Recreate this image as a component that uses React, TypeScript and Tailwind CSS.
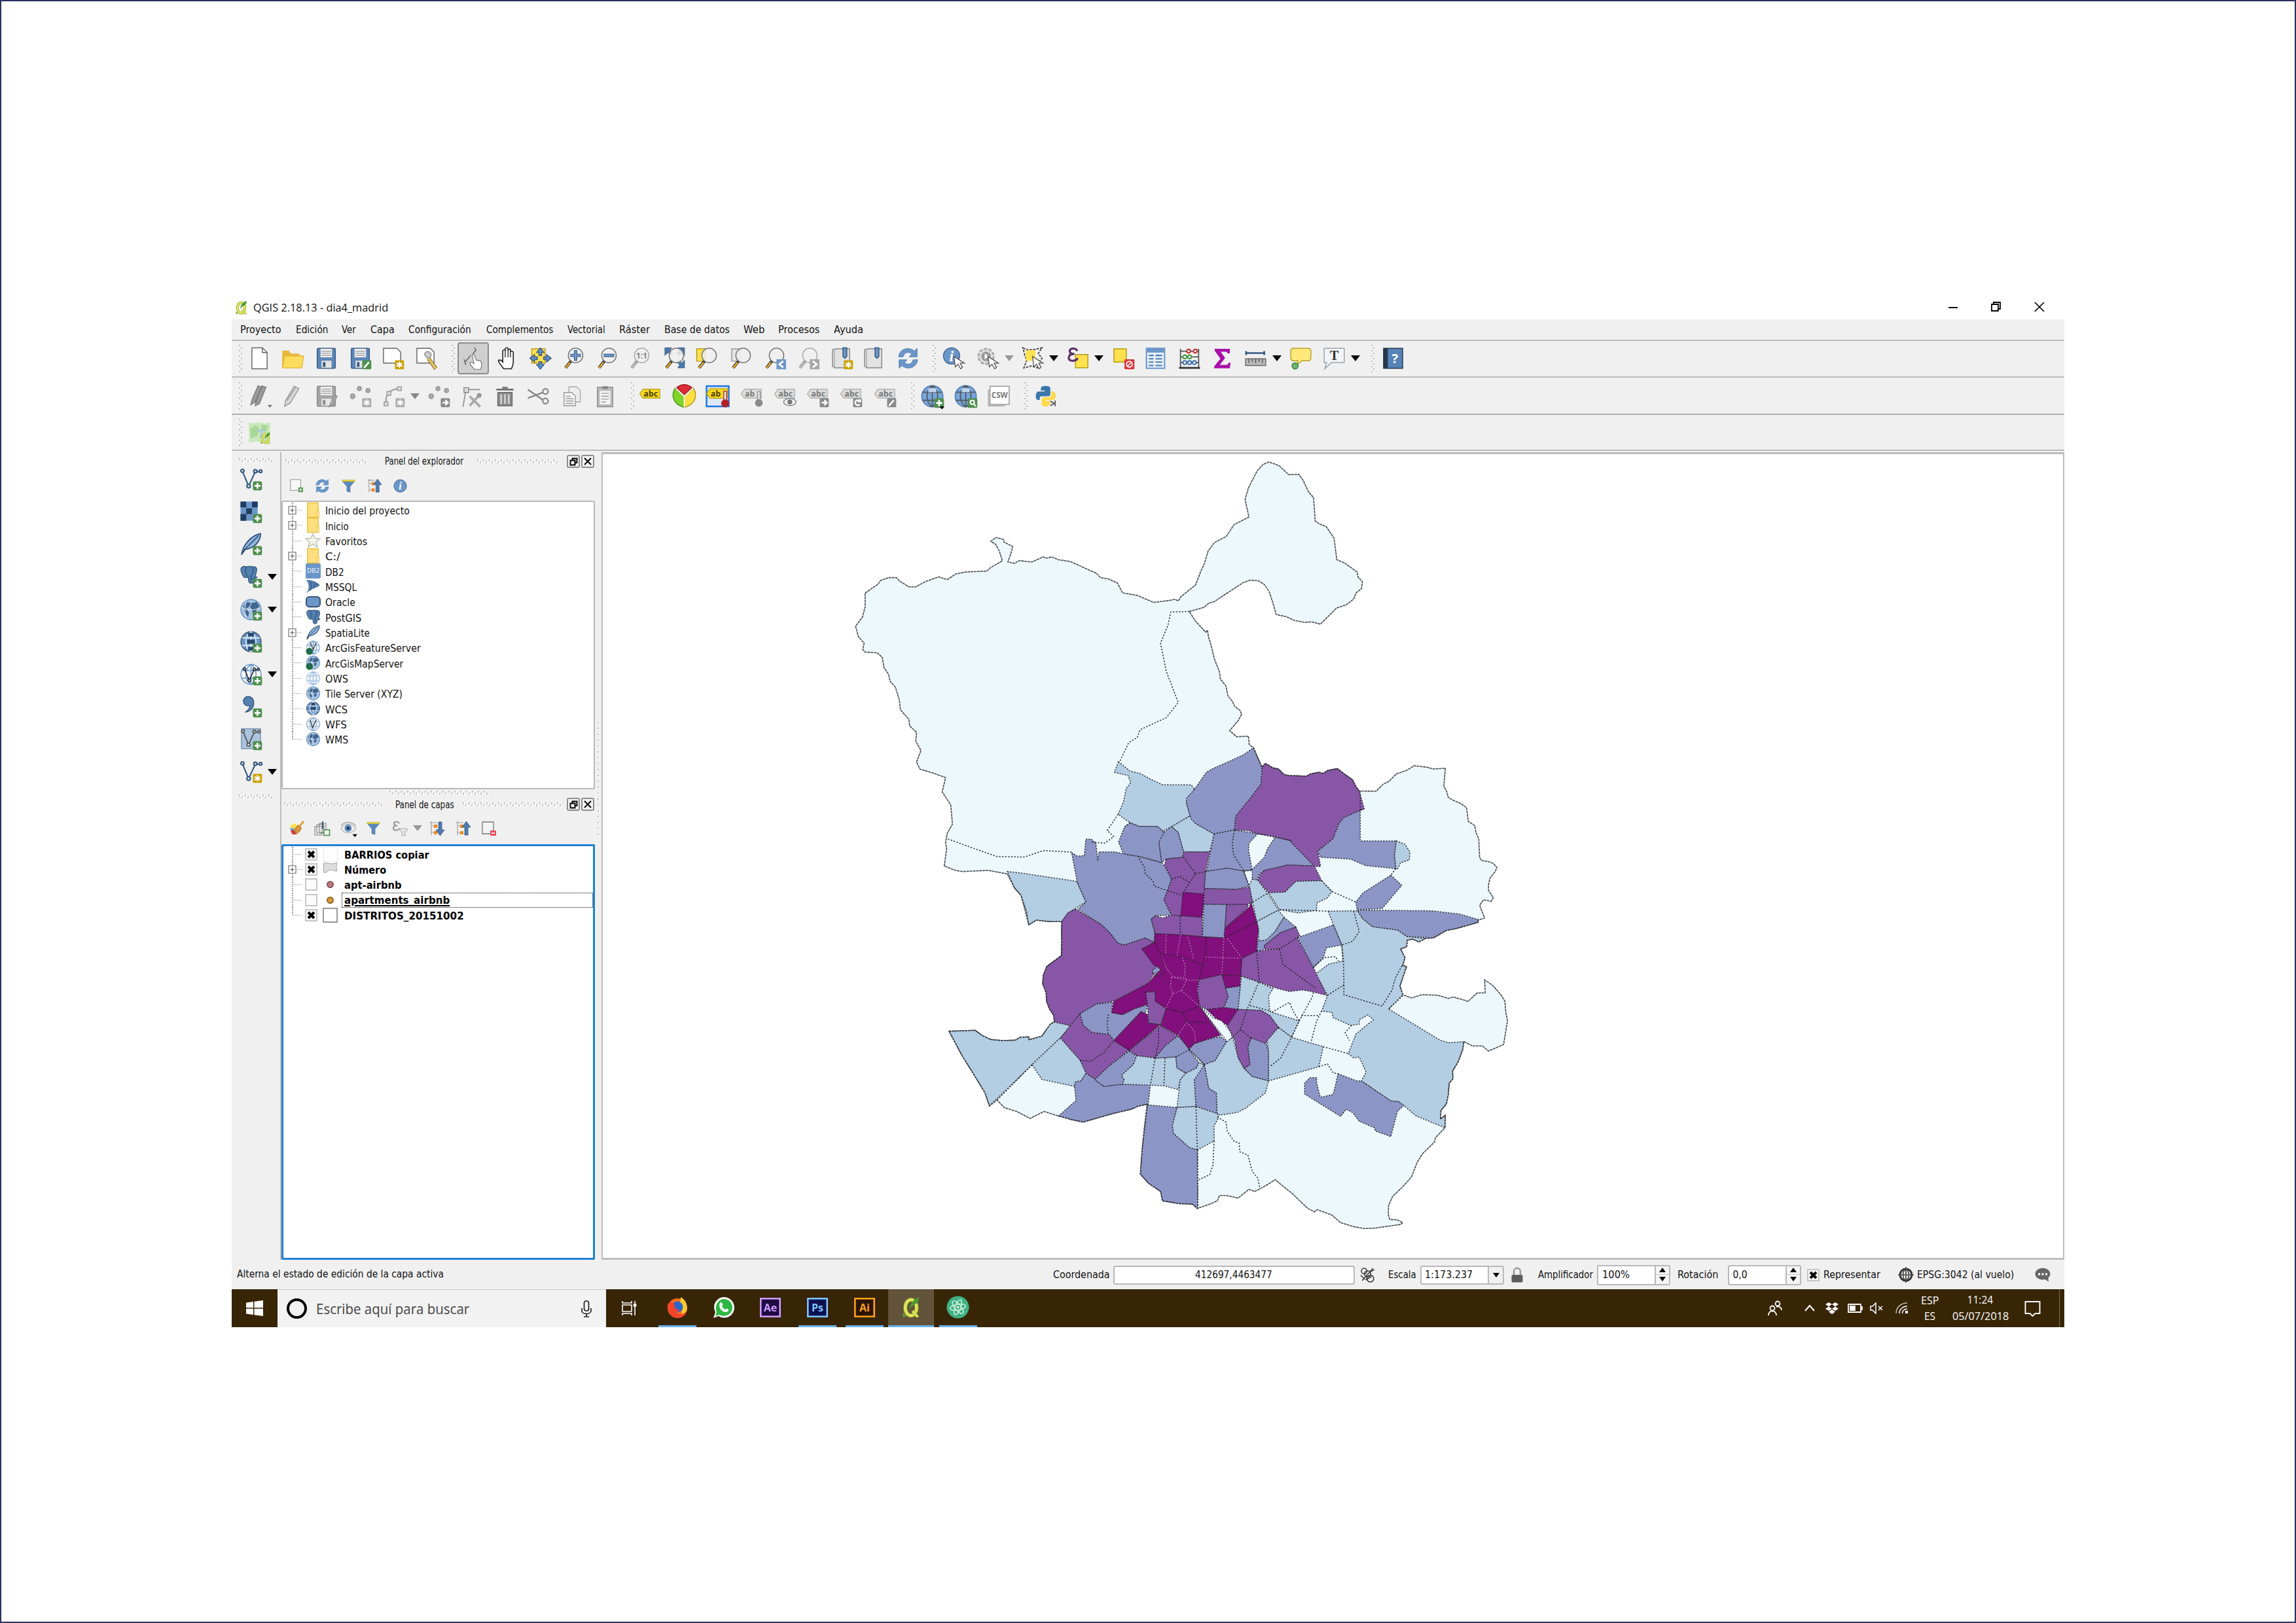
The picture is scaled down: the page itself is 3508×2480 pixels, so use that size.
import React, { useLayoutEffect, useRef, useState } from "react";

/* ---------- text that is fitted to a given width ---------- */
function Fit({ w, children, className = "", inner = "" }: { w: number; children: string; className?: string; inner?: string }) {
  const ref = useRef<HTMLSpanElement>(null);
  const [k, setK] = useState(1);
  useLayoutEffect(() => {
    if (ref.current && ref.current.offsetWidth) setK(w / ref.current.offsetWidth);
  }, [w, children]);
  return (
    <span className={"block shrink-0 whitespace-nowrap " + className} style={{ width: w }}>
      <span ref={ref} className={"inline-block origin-left " + inner} style={{ transform: `scaleX(${k})` }}>
        {children}
      </span>
    </span>
  );
}

/* ---------- strip: items laid one after another by their centres ---------- */
type Item = [number, number, React.ReactNode];
function Strip({ from, items, className = "" }: { from: number; items: Item[]; className?: string }) {
  let end = from;
  return (
    <div className={"flex items-center " + className}>
      {items.map(([c, w, node], i) => {
        const ml = c - w / 2 - end;
        end = c + w / 2;
        return (
          <div key={i} className="flex shrink-0 items-center justify-center" style={{ marginLeft: ml, width: w }}>
            {node}
          </div>
        );
      })}
    </div>
  );
}

const BL = "#6b96c8";
const DB = "#34597f";
const G = "#999";

function I({ s = 35, children, className = "" }: { s?: number; children: React.ReactNode; className?: string }) {
  return (
    <svg width={s} height={s} viewBox="0 0 24 24" fill="none" className={"shrink-0 overflow-visible " + className}>
      {children}
    </svg>
  );
}
const Arrow = ({ c = "#000" }: { c?: string }) => (
  <svg width="14" height="9" viewBox="0 0 14 9" className="shrink-0"><path d="M0 0h14L7 9z" fill={c} /></svg>
);
const Handle = () => (
  <svg width="8" height="44" viewBox="0 0 8 44" className="shrink-0">
    {[0, 1, 2, 3, 4, 5].map((i) => (
      <g key={i}>
        <path d={`M1 ${1 + i * 8}h2v2h-2zM4 ${5 + i * 8}h2v2h-2z`} fill="#bbb" />
        <path d={`M0 ${3 + i * 8}h2v1h-2zM3 ${7 + i * 8}h2v1h-2z`} fill="#fff" />
      </g>
    ))}
  </svg>
);
function Dots({ w }: { w: number }) {
  const n = Math.floor(w / 9);
  return (
    <svg width={w} height="9" viewBox={`0 0 ${w} 9`} className="shrink-0">
      {Array.from({ length: n }, (_, i) => (
        <g key={i}>
          <path d={`M${i * 9 + 1} 1h2v3h-2zM${i * 9 + 5} 4h2v3h-2z`} fill="#c4c4c4" />
          <path d={`M${i * 9 + 3} 2h2v3h-2zM${i * 9 + 7} 5h2v3h-2z`} fill="#fff" />
        </g>
      ))}
    </svg>
  );
}
const Plus = ({ c = "#4f8f4f" }: { c?: string }) => (
  <g><rect x="14" y="14" width="9.5" height="9.5" rx="1.5" fill={c} /><path d="M18.75 15.8v6M15.8 18.75h6" stroke="#fff" strokeWidth="1.8" /></g>
);
const Star = ({ c = "#c9a100" }: { c?: string }) => (
  <g><rect x="14" y="14" width="9.5" height="9.5" rx="1" fill={c} /><path d="M18.75 15.5v6.5M15.8 17l6 3.4M21.6 17l-6 3.4" stroke="#fff" strokeWidth="1.4" /></g>
);
const Sheet = () => <path d="M2 1.5h14l4 4V17H2z" fill="#fff" stroke="#666" strokeWidth="1" />;
const Lens = ({ g = false, children }: { g?: boolean; children?: React.ReactNode }) => (
  <g>
    <path d="M9.5 14.5L3.5 22" stroke={g ? "#999" : "#333"} strokeWidth="3.2" />
    <path d="M8.2 16.3L3.6 22" stroke={g ? "#bbb" : "#e8a92c"} strokeWidth="1.8" />
    <circle cx="14" cy="9" r="7.6" fill="#eef0ee" fillOpacity=".85" stroke={g ? "#aaa" : "#777"} strokeWidth="1" />
    {children}
  </g>
);
const Floppy = ({ g = false }: { g?: boolean }) => (
  <g>
    <rect x="2.5" y="1.5" width="19" height="21" rx="1" fill={g ? "#a5a5a5" : "#5c86b8"} stroke={g ? "#888" : "#3c5d85"} />
    <path d="M6 2h12v9H6z" fill="#f0f0f0" /><path d="M7 4.5h10M7 6.8h10M7 9h10" stroke="#999" strokeWidth=".9" />
    <path d="M7 14.5h10.5V22H7z" fill="#e4e4e4" /><path d="M8.5 16h2.6v5H8.5z" fill={g ? "#888" : "#34597f"} />
  </g>
);
const Refresh = () => (
  <g fill={BL} stroke="#3f74b5" strokeWidth=".5">
    <path d="M2 10.5C2.5 5 7 1.5 12 1.8c2.500 0 5 1 6.500 2.500L21.500 1.500V10.500H13L15.800 7.400C12 4.500 8 6 6.800 10.500z" />
    <path d="M22 13.500C21.500 19 17 22.500 12 22.200c-2.500 0-5-1-6.500-2.500L2.500 22.500V13.500H11L8.200 16.600C12 19.500 16 18 17.200 13.500z" />
  </g>
);
const Tag = ({ c = "#c9c9c9", t = "abc", k = "#888" }: { c?: string; t?: string; k?: string }) => (
  <g>
    <path d="M1 9.500L4.500 4.500H22V14H4.500z" fill={c} stroke={k} strokeWidth=".8" />
    <text x="5" y="12" fontSize="8.500" fontWeight="bold" fontFamily="Open Sans, sans-serif" fill={c === "#c9c9c9" || c === "#ddd" ? "#777" : "#4a4000"} textLength={t.length * 5} lengthAdjust="spacingAndGlyphs">{t}</text>
  </g>
);
const Cursor = () => <path d="M12 10l1.500 11 2.700-2.800L19 23l2-1.500-2.500-4.400H23z" fill="#fff" stroke="#555" strokeWidth=".9" />;
const Globe = ({ fill = "#9cbce0", line = "#fff", edge = "#4a78ac" }: { fill?: string; line?: string; edge?: string }) => (
  <g>
    <circle cx="12" cy="12" r="10.500" fill={fill} stroke={edge} strokeWidth="1" />
    <path d="M2.500 8h19M2.500 16h19M12 1.500v21M12 1.500C5 6 5 18 12 22.500M12 1.500C19 6 19 18 12 22.500" stroke={line} strokeWidth="1.100" />
  </g>
);
const Earth = () => (
  <g>
    <circle cx="12" cy="12" r="10.500" fill="#a9c4e2" stroke={BL} strokeWidth="1.200" />
    <path d="M4 8l4-4 4 1-2 4-3 2 3 4-1 5-4-5zM13 5l5-1 3 5-3 2-1 5-3 2-1-6-2-3z" fill="#41678f" />
    <path d="M2 10c6 3 14 3 20 0M7 3c-2 6-2 12 0 18" stroke="#dbe7f4" strokeWidth=".8" />
  </g>
);
const Vee = ({ c = "#34597f" }: { c?: string }) => (
  <g stroke={c} strokeWidth="1.400">
    <path d="M3 3.500L9.500 19 16.500 4H22" /><circle cx="3" cy="3" r="1.700" fill="#ddd" /><circle cx="9.500" cy="19" r="1.900" fill="#ddd" />
    <circle cx="16.500" cy="3.500" r="1.700" fill="#ddd" /><circle cx="22" cy="3.500" r="1.500" fill="#ddd" />
  </g>
);
const Elephant = () => (
  <g>
    <path d="M2 3.500C4 .8 7 1 9 2c3-1 6-1 8 0 3-1 6 .5 5.500 4C22 10 21 13 20 15h3c-1 2-3 2.500-5 2v4c0 3-5.500 3-6 0l-.700-6c-2 1.500-5 1.500-6.300-.5C3 11 1 7 2 3.500z" fill="#5480b0" stroke="#2f4f75" strokeWidth="1" />
    <path d="M9 2C7 5 8 11 10 14M17 2c2 3 1 8-2 11v7" stroke="#2f4f75" strokeWidth="1.100" />
  </g>
);
const Feather = () => (
  <g><path d="M2 23C4 12 12 3 22 1c0 8-6 15-16 16.500z" fill="#8fb3db" stroke="#2f4f75" strokeWidth="1.200" /><path d="M3 20L20 3" stroke="#2f4f75" strokeWidth="1" /></g>
);
const Funnel = () => <g><path d="M2 4h20l-7.500 9v9l-5-1.500V13z" fill="#5a89bf" stroke="#41699a" strokeWidth=".8" /><path d="M2 2.500h20v2.500H2z" fill="#f2df3a" stroke="#a29325" strokeWidth=".5" /></g>;
const TreeArrow = ({ up = false }: { up?: boolean }) => (
  <g><path d="M3 1v21M3 8h5M3 18h5M1 3h11" stroke="#999" strokeWidth="1.100" /><path d="M7 6h5v5H7zM7 16h5v5H7z" fill="#f08a1c" />
    <path d={up ? "M14 22V10h-4l6.500-9L23 10h-4v12z" : "M14 2v12h-4l6.500 9L23 14h-4V2z"} fill="#4f7cb0" stroke="#2f5580" strokeWidth=".8" /></g>
);
const Info = () => <g><circle cx="12" cy="12" r="10" fill={BL} stroke="#41699a" /><text x="12" y="18" fontSize="17" fontStyle="italic" fontWeight="bold" textAnchor="middle" fontFamily="Liberation Serif, serif" fill="#fff">i</text></g>;
const GDots = () => <g fill="#aaa" stroke="#888" strokeWidth=".7"><circle cx="11" cy="4" r="2.200" /><circle cx="20" cy="6" r="2.200" /><circle cx="4" cy="12" r="2.500" /></g>;
const GBadge = ({ d }: { d: string }) => <g><rect x="14" y="14" width="9.500" height="9.500" rx="1" fill="#8a8a8a" /><path d={d} stroke="#fff" strokeWidth="1.700" /></g>;
const Epsilon = ({ c }: { c: string }) => (
  <path d="M10.500 3.500C9 1 3 1 3 4.500c0 2.500 2.500 3 5 3-3.500 0-6 1-6 4 0 4 7 4 9 1" stroke={c} strokeWidth="2.200" strokeLinecap="round" />
);
const QLogo = () => (
  <g>
    <ellipse cx="11.500" cy="12.500" rx="6.300" ry="8.800" stroke="#8d9c2a" strokeWidth="4.400" />
    <ellipse cx="11.500" cy="12.500" rx="6.300" ry="8.800" stroke="#dde65c" strokeWidth="3.200" />
    <path d="M12 17l3-2 5.500 7.500-3 1z" fill="#dde65c" stroke="#8d9c2a" strokeWidth=".6" />
    <path d="M10 14c0-5 3-10 10-13.500.8 3.500-.5 6.500-3.500 8-2.500 1-4 2.500-6.500 5.500z" fill="#4c9a2f" />
    <path d="M3 18l3 4-3.500 1z" fill="#6da33a" />
  </g>
);

const row1: Item[] = [
  [368, 8, <Handle />],
  [396, 36, <I><path d="M4 1h11l5 5v17H4z" fill="#fff" stroke="#666" /><path d="M15 1v5h5" stroke="#666" /></I>],
  [446.5, 36, <I><path d="M1.500 4h7l2 3h9v15h-18z" fill="#e8b93b" /><path d="M2 22L4 9.500h20L22 22z" fill="#fddc5c" stroke="#e0b13a" strokeWidth=".8" /></I>],
  [498, 36, <I><Floppy /></I>],
  [550, 36, <I><Floppy /><rect x="14" y="14" width="9.500" height="9.500" rx="1" fill="#4f8f4f" /><path d="M16 22l5-6" stroke="#fff" strokeWidth="1.800" /></I>],
  [600, 36, <I><Sheet /><Star /></I>],
  [651, 36, <I><Sheet /><path d="M10 8a3.500 3.500 0 1 1 4 4l-2-1z" fill="#ccc" stroke="#888" /><path d="M14 12l8 11" stroke="#8a7430" strokeWidth="4" /><path d="M14 12l8 11" stroke="#e0c468" strokeWidth="2.500" /></I>],
  [693, 8, <Handle />],
  [723, 48, (
    <div className="flex h-[49px] w-[48px] items-center justify-center rounded-sm border-2 border-[#8b8b8b] bg-[#cfcfcf]">
      <I><path d="M13 23.500c-2-2.500-4-4-5-6.500l1.500-1 3 1.500L10.500 8l1.800-.5L15 14l3.500.500c2.500 1 2.500 5 1 9z" fill="#fff" stroke="#777" strokeWidth=".8" /><path d="M11.500 7l3-3.500L13 1M3 16l6-7M2 13l2 6" stroke="#555" strokeWidth=".9" /></I>
    </div>
  )],
  [775, 36, <I><path d="M8 23c-2-3-6-7-5.500-9L5 14l2 2V4c1-1.500 2.500-1 2.500 0V2c1-1.500 2.500-1.500 3 0v1c1-1 2.500-1 2.500.5V5c1-1 3-.5 3 1v10c0 3-1 5-2 7z" fill="#fff" stroke="#222" strokeWidth="1.100" /><path d="M9.500 3.500V11M12.500 3v8M15 4v7" stroke="#222" strokeWidth=".9" /></I>],
  [825, 38, <I><path d="M3 2h14v15H3z" fill="#ffe14d" stroke="#b59a1a" /><path d="M12 1l4 5h-2.500v3h-3V6H8zM12 23.500l4-5h-2.500v-3h-3v3H8zM1 12l5-4v2.500h3v3H6V16zM23.500 12l-5-4v2.500h-3v3h3V16z" fill="#5b8cc5" stroke="#28486c" strokeWidth=".7" /></I>],
  [876, 36, <I><Lens><path d="M14 3.500v11M8.500 9h11" stroke={DB} strokeWidth="3.400" /><path d="M14 4v10M9 9h10" stroke={BL} strokeWidth="2" /></Lens></I>],
  [927, 36, <I><Lens><path d="M8.500 9h11" stroke={DB} strokeWidth="3.400" /><path d="M9 9h10" stroke={BL} strokeWidth="2" /></Lens></I>],
  [977.5, 36, <I><Lens g><text x="8" y="12" fontSize="8.500" fontWeight="bold" fontFamily="Open Sans, sans-serif" fill="#888" textLength="12">1:1</text></Lens></I>],
  [1030, 36, <I><path d="M2 1h7L7 4l3 3-2 2-3-3-3 3zM22.500 1h-7l2 3-3 3 2 2 3-3 3 3zM22.500 22h-7l2-3-3-3 2-2 3 3 3-3z" fill="#4a77ad" stroke="#2f5580" strokeWidth=".6" /><Lens /></I>],
  [1080, 36, <I><path d="M1 2h9v13H1z" fill="#ffe14d" stroke="#b59a1a" /><Lens /></I>],
  [1132, 36, <I><path d="M2 2h9v13H2z" fill="#e4e4e4" stroke="#999" /><Lens /></I>],
  [1183.5, 36, <I><Lens /><rect x="14" y="13" width="10" height="10.500" fill={BL} /><path d="M21 15l-4 3.300 4 3.300" stroke="#fff" strokeWidth="2" /></I>],
  [1234, 36, <I><Lens g /><rect x="14" y="13" width="10" height="10.500" fill="#a8a8a8" /><path d="M17 15l4 3.300-4 3.300" stroke="#fff" strokeWidth="2" /></I>],
  [1286, 36, <I><path d="M2 3l3-1h15v20H4l-2-2z" fill="#e2e2e2" stroke="#888" /><path d="M4 3v18" stroke="#aaa" /><path d="M13 1h4v9l-2 2-2-2z" fill={BL} stroke={DB} /><Star /></I>],
  [1335, 36, <I><path d="M2 3l3-1h15v20H4l-2-2z" fill="#e2e2e2" stroke="#888" /><path d="M4 3v18" stroke="#aaa" /><path d="M13 1h4v9l-2 2-2-2z" fill={BL} stroke={DB} /></I>],
  [1387, 36, <I><Refresh /></I>],
  [1428, 8, <Handle />],
  [1457, 36, <I><circle cx="9.500" cy="9.500" r="8.500" fill={BL} stroke="#41699a" /><text x="9.500" y="15" fontSize="16" fontStyle="italic" fontWeight="bold" textAnchor="middle" fontFamily="Liberation Serif, serif" fill="#fff">i</text><Cursor /></I>],
  [1509, 36, <I><circle cx="10" cy="10" r="8" fill="#ddd" stroke="#aaa" strokeWidth="2" strokeDasharray="3.500 1.500" /><circle cx="10" cy="10" r="5" fill="#9b9b9b" /><path d="M8.500 7v6l4.500-3z" fill="#fff" /><Cursor /></I>],
  [1542, 14, <Arrow c="#999" />],
  [1577, 36, <I><path d="M2 1l4 2h7l9-2-4 6 4 5-3 4-2 6-6-2-8 2 3-8-2-5z" fill="#f4f4f4" stroke="#444" strokeWidth="1.300" strokeDasharray="2.500 1.200" /><path d="M5 3.500h10v11H5z" fill="#ffe14d" /><Cursor /></I>],
  [1610, 14, <Arrow />],
  [1647, 36, <I><path d="M9 8h13v14H9z" fill="#ffe14d" stroke="#b59a1a" /><Epsilon c="#5b3069" /></I>],
  [1679, 14, <Arrow />],
  [1716, 36, <I><path d="M2 2h13v14H2z" fill="#ffe14d" stroke="#b59a1a" /><rect x="13" y="13" width="10.500" height="10.500" rx="1" fill="#d9363e" /><circle cx="18.200" cy="18.200" r="3" stroke="#fff" strokeWidth="1.200" /><path d="M16 20.500l4.500-4.500" stroke="#fff" /></I>],
  [1765, 36, <I><path d="M2.500 1.500h19v21h-19z" fill="#e8f0fa" stroke={BL} strokeWidth="1.400" /><path d="M3 2h18v4H3z" fill={BL} /><path d="M5 9h5M12 9h7M5 12.500h5M12 12.500h7M5 16h5M12 16h7M5 19.500h5M12 19.500h7" stroke="#4a7ab4" strokeWidth="1.400" /></I>],
  [1817, 36, <I><path d="M2.500 2v20M21.500 2v20M2 4.500h20M2 10.500h20M2 16.500h20" stroke="#555" strokeWidth="1.200" /><path d="M1 21h22v2H1z" fill="#333" /><g strokeWidth="1.300" fill="#fff"><circle cx="11" cy="4.500" r="1.900" stroke="#c22" /><circle cx="18" cy="4.500" r="1.900" stroke="#c22" /><circle cx="7" cy="10.500" r="1.900" stroke="#3b9a3b" /><circle cx="12" cy="10.500" r="1.900" stroke="#3b9a3b" /><circle cx="7" cy="16.500" r="1.900" stroke="#3b6fa8" /><circle cx="12" cy="16.500" r="1.900" stroke="#3b6fa8" /><circle cx="17" cy="16.500" r="1.900" stroke="#3b6fa8" /></g></I>],
  [1867, 36, <I><path d="M4.500 2.500h15v4h-1.500C17.500 5 17 4.700 15 4.700H9.500l5 7-6 7.600H16c2 0 2.500-.800 3-2.300h1.200l-.700 5H4v-1.500l6.500-8L4.500 4z" fill="#a80fa8" stroke="#a80fa8" strokeWidth=".8" /></I>],
  [1918, 36, <I><path d="M2 6.500h19M2 4.500v4M21 4.500v4" stroke={DB} strokeWidth="1.800" /><path d="M1.500 12.500h21v7h-21z" fill="#bbb" stroke="#666" /><path d="M5 13v4M8.500 13v3M12 13v4M15.500 13v3M19 13v4" stroke="#555" /></I>],
  [1951, 14, <Arrow />],
  [1987, 36, <I><path d="M3 1.500h18l1.500 2v9L21 14.500h-8L8 19l1-4.500H3L1.500 12.500v-9z" fill="#ffe97a" stroke="#b9a02a" /><circle cx="6" cy="20" r="3.200" fill="#6cb56c" stroke="#3d7d3d" /></I>],
  [2038, 36, <I><path d="M1.500 1.500h21v15H9L2 23l2-6.500H1.500z" fill="#f2f5f7" stroke="#99a3a8" strokeWidth="1" /><text x="12" y="13.500" fontSize="14" fontWeight="bold" textAnchor="middle" fontFamily="Liberation Serif, serif" fill="#333">T</text></I>],
  [2071, 14, <Arrow />],
  [2098, 8, <Handle />],
  [2128, 36, <I><path d="M2 1.500h20v21H2z" fill="#5683b8" stroke="#2a3b50" /><path d="M2 1.500h4.500v21H2z" fill="#26374b" /><text x="14" y="17" fontSize="14" fontWeight="bold" textAnchor="middle" fontFamily="Open Sans, sans-serif" fill="#fff">?</text></I>],
];

const abcGray = (t: string, extra: React.ReactNode) => <I><Tag c="#ddd" t={t} k="#aaa" />{extra}</I>;
const Thermo = ({ c }: { c: string }) => <g><path d="M18 7h3v10h-3z" fill="#ddd" stroke={c} strokeWidth=".8" /><circle cx="19.500" cy="19" r="4" fill={c} /></g>;
const row2: Item[] = [
  [368, 8, <Handle />],
  [398, 38, <I><path d="M1.500 21l1-5L9 1l4 1.500L6 18zM6 22l1-5L13 1l4.500 1.500L10.500 20z" fill="#9a9a9a" stroke="#777" strokeWidth=".8" /><path d="M19 21h5l-2.500 3z" fill="#777" /></I>],
  [446.5, 36, <I><path d="M4 22.500l1-6L14 1.500l5 2.500L10 19z" fill="#d8d8d8" stroke="#999" /><path d="M6.500 16.500L15.500 2.500" stroke="#999" /></I>],
  [498, 36, <I><Floppy g /><path d="M15 23l1.500-4L21.500 11l2 1-4.500 9z" fill="#aaa" stroke="#888" strokeWidth=".8" /></I>],
  [550, 36, <I><GDots /><Star c="#aaa" /></I>],
  [601.5, 36, <I><path d="M4 20C3 10 7 5 18 4" stroke={G} strokeWidth="1.400" /><path d="M2 18h4v4H2zM16 2h4v4h-4zM5 7h4v4H5z" fill="#ddd" stroke="#999" /><Star c="#aaa" /></I>],
  [633.5, 14, <Arrow c="#888" />],
  [670, 36, <I><GDots /><GBadge d="M16 18.700h5M18.800 16l2.700 2.700-2.700 2.700" /></I>],
  [720, 36, <I><path d="M6 6L3 23M7 5h14" stroke={G} strokeWidth="1.300" /><path d="M4 3h5v5H4z" fill="#ddd" stroke="#888" /><path d="M10 22L20 11M10 12l11 11" stroke="#aaa" strokeWidth="2.600" /><circle cx="20" cy="11" r="2.500" fill="#999" /></I>],
  [771, 36, <I><path d="M3 5h18M9 3h6" stroke="#666" strokeWidth="1.700" /><path d="M4.500 8h15v14h-15z" fill="#8d8d8d" stroke="#666" /><path d="M8 10v10M12 10v10M16 10v10" stroke="#e0e0e0" strokeWidth="1.500" /></I>],
  [822, 36, <I><path d="M1 5l16 11M1 14l16-6" stroke="#888" strokeWidth="1.700" /><circle cx="19.500" cy="7" r="2.800" stroke="#888" strokeWidth="1.500" /><circle cx="19.500" cy="17" r="2.800" stroke="#888" strokeWidth="1.500" /></I>],
  [873.5, 36, <I><path d="M9 2h8l4 4v12H9z" fill="#eee" stroke="#aaa" /><path d="M4 8h8l4 4v10H4z" fill="#f4f4f4" stroke="#999" /><path d="M6 12h5M6 14.500h8M6 17h8M6 19.500h8" stroke="#999" /></I>],
  [924.6, 36, <I><path d="M4 2.500h16V23H4z" fill="#c2c2c2" stroke="#888" /><path d="M6 6h12v15H6z" fill="#f4f4f4" stroke="#aaa" strokeWidth=".7" /><path d="M9 1.500h6v3H9z" fill="#888" /><path d="M8 9h8M8 12h8M8 15h8M8 18h5" stroke="#999" /></I>],
  [967, 8, <Handle />],
  [994, 36, <I><Tag c="#f7d91e" k="#b59a1a" /></I>],
  [1046, 38, <I s={37}><path d="M12 12L3 4C-1 10 0 20 12 23z" fill="#7fd42c" stroke="#4e9a12" /><path d="M12 12L21 4c4 6 3 16-9 19z" fill="#ffdf3f" stroke="#b59a1a" /><path d="M12 11L4.500 3.500C9-.5 15-.5 19.500 3.500z" fill="#dc2b33" stroke="#a31920" /><path d="M12 23V12L3.500 4M12 12l8.500-8" stroke="#fff" strokeWidth="1.200" /></I>],
  [1097, 38, <I s={37}><path d="M1 2h22v20H1z" fill="#dde9f7" stroke="#1d74e0" strokeWidth="1.600" /><Tag c="#f7d91e" k="#b59a1a" t="ab" /><Thermo c="#b3202a" /></I>],
  [1149, 36, abcGray("ab", <Thermo c="#8a8a8a" />)],
  [1199.5, 36, abcGray("abc", <g><ellipse cx="17" cy="18" rx="6.500" ry="3.800" fill="#eee" stroke="#888" /><circle cx="17" cy="18" r="2.500" fill="#777" /></g>)],
  [1250, 36, abcGray("abc", <GBadge d="M16 18.700h5M18.800 16l2.700 2.700-2.700 2.700" />)],
  [1301, 36, abcGray("abc", <GBadge d="M21 17a2.700 2.700 0 1 0 0 3.500M21.500 15v2.500H19" />)],
  [1353, 36, abcGray("abc", <GBadge d="M16 22l5-6" />)],
  [1395, 8, <Handle />],
  [1425, 38, <I s={37}><Globe fill="#76a6dc" line="#555" edge="#4c7cb0" /><path d="M8 4h8v4H8z" fill="#bcd6f2" /><Plus /><path d="M19 22h5l-2.500 3z" fill="#000" /></I>],
  [1475.5, 38, <I s={37}><Globe fill="#76a6dc" line="#555" edge="#4c7cb0" /><path d="M8 4h8v4H8z" fill="#bcd6f2" /><rect x="14" y="14" width="9.500" height="9.500" rx="1.500" fill="#4f8f4f" /><circle cx="18.500" cy="18" r="2" stroke="#fff" strokeWidth="1.300" /><path d="M20 19.500l2 2.500" stroke="#fff" strokeWidth="1.300" /></I>],
  [1527, 38, <I><path d="M1 5v17h17" stroke="#aaa" strokeWidth="1.300" /><path d="M2.500 1.500h20v19h-20z" fill="#fff" stroke="#999" /><text x="4" y="14" fontSize="9" fontWeight="bold" fontFamily="Open Sans, sans-serif" fill="#777" textLength="17" lengthAdjust="spacingAndGlyphs">CSW</text></I>],
  [1568, 8, <Handle />],
  [1598, 36, <I><path d="M8 2c2-1 6-1 8 0 1 1 1 2 1 4v4c0 1-1 2-2 2H8c-2 0-2 1-2 4H4c-3 0-3-8 0-9h7V6H7c0-2 0-3 1-4z" fill="#3b76ab" /><path d="M18 7h2c4 1 3 8 0 9h-8v1h5c0 3 0 4-2 5-2 1-5 1-6 0-2-1-1-5-1-7 0-1 1-2 2-2h6c2 0 2-2 2-6z" fill="#ffd94a" /><path d="M17 17l4 2.500-4 2.500M22 22.500v-6" stroke="#555" strokeWidth="1.200" /></I>],
];

const side: [React.ReactNode, boolean][] = [
  [<><Vee /><Plus /></>, false],
  [<><path d="M1 1h18v20H1z" fill={BL} /><path d="M1 1h6v6H1zM13 1h6v6h-6zM7 8h6v6H7zM1 14h6v7H1z" fill="#1f3d5f" /><Plus /></>, false],
  [<><Feather /><Plus /></>, false],
  [<><g transform="scale(.8)"><Elephant /></g><Plus /></>, true],
  [<><Earth /><Plus /></>, true],
  [<><Globe fill="#6b96c8" line="#e8f0fa" edge="#2b4a6b" /><path d="M8 10h8v4H8zM9 2.500h6v4H9zM9 17.500h5v4H9z" fill="#27476a" /><Plus /></>, false],
  [<><Globe fill="#f4f9fe" line={BL} edge={BL} /><g transform="translate(3 4) scale(.75)"><Vee c="#223" /></g><Plus /></>, true],
  [<><path d="M9 1.500a5 5 0 0 0 0 10c1.500 0 2 0 2-.5 0 3-2 5-5 7 6-1 9-5 9-10.500C15 4 12.500 1.500 9 1.500z" fill="#5480b0" stroke="#2f4f75" strokeWidth=".8" /><Plus /></>, false],
  [<><path d="M2 1h20v21H2z" fill="#aac3df" stroke="#7f97b2" /><g transform="translate(1 1) scale(.88)"><Vee c="#555" /></g><Plus /></>, false],
  [<><Vee /><Star /></>, true],
];

const Folder = () => <I s={23}><path d="M3 .5h17v23H3z" fill="#ffdf80" stroke="#e8bf3f" strokeWidth="1.500" /><path d="M18 13h3.500v10.500H18z" fill="#ffe9a6" stroke="#e8bf3f" /></I>;
const tree: [string, number, boolean, React.ReactNode][] = [
  ["Inicio del proyecto", 128.4, true, <Folder />],
  ["Inicio", 36, true, <Folder />],
  ["Favoritos", 64.4, false, <I s={24}><path d="M12 1.500l3 7 8 .5-6 5 2 8-7-4.500L5 22l2-8-6-5 8-.5z" fill="#f3f3ea" stroke="#c3c5b0" strokeWidth="1.600" /></I>],
  ["C:/", 22.6, true, <Folder />],
  ["DB2", 28.5, false, <I s={23}><rect width="24" height="24" rx="2" fill={BL} /><text x="2" y="15" fontSize="9.500" fontFamily="Open Sans, sans-serif" fill="#fff" textLength="20" lengthAdjust="spacingAndGlyphs">DB2</text></I>],
  ["MSSQL", 47.7, false, <I s={23}><path d="M1 1c9 0 17 3 22 9-6 3-14 6-22 13C6 16 6 8 1 1z" fill="#5480b0" /><path d="M6 2c4 5 4 12 1 16M12 4c3 4 3 8 1 11M17 6c2 3 2 5 1 7" stroke="#2f4f75" /></I>],
  ["Oracle", 45.5, false, <I s={23}><rect x="1" y="4" width="22" height="16" rx="5" fill={BL} stroke="#34506f" strokeWidth="2" /></I>],
  ["PostGIS", 55.5, false, <I s={23}><Elephant /></I>],
  ["SpatiaLite", 68, true, <I s={23}><Feather /></I>],
  ["ArcGisFeatureServer", 146, false, <I s={23}><Globe fill="#eef5fc" line={BL} edge={BL} /><path d="M7 4l5 11 5-11" stroke="#333" strokeWidth="1.200" /><circle cx="6" cy="18" r="5.500" fill="#1f6b3a" /><path d="M3 17l4-2 1 4z" fill="#2b56b8" /></I>],
  ["ArcGisMapServer", 119.5, false, <I s={23}><Earth /><circle cx="6" cy="18" r="5.500" fill="#1f6b3a" /><path d="M3 17l4-2 1 4z" fill="#2b56b8" /></I>],
  ["OWS", 35.5, false, <I s={23}><Globe fill="#eef5fc" line="#8fb3db" edge="#8fb3db" /></I>],
  ["Tile Server (XYZ)", 117.6, false, <I s={23}><Earth /></I>],
  ["WCS", 33.7, false, <I s={23}><Globe fill="#5f8bbd" line="#dbe7f4" edge="#2b4a6b" /><path d="M8 10h8v4H8zM9 3h6v4H9z" fill="#27476a" /></I>],
  ["WFS", 32.5, false, <I s={23}><Globe fill="#eef5fc" line="#8fb3db" edge={BL} /><path d="M7 5l4 13 6-13" stroke="#333" strokeWidth="1.300" /></I>],
  ["WMS", 35.5, false, <I s={23}><Earth /></I>],
];

const Branch = ({ plus, last, h }: { plus: boolean; last?: boolean; h: string }) => (
  <svg width="24" viewBox="0 0 24 24" preserveAspectRatio="none" className={"shrink-0 " + h}>
    <path d={last ? "M8 0v12" : "M8 0v24"} stroke="#999" strokeWidth="2" strokeDasharray="2 1.500" />
    <path d="M10 12h12" stroke="#999" strokeWidth="1.300" strokeDasharray="1.300 1.500" />
    {plus && <g><rect x="2" y="6" width="11" height="12" fill="#fff" stroke="#888" strokeWidth="1.400" /><path d="M7.500 8.500v7M4.500 12h6" stroke="#666" strokeWidth="1.200" /></g>}
  </svg>
);

const Check = ({ on }: { on: boolean }) => (
  <span className="flex h-[19px] w-[19px] shrink-0 items-center justify-center border-2 border-[#c6c6c6] bg-[#fbfbfb]">
    {on && <svg width="13" height="13" viewBox="0 0 13 13"><path d="M2 2l9 9M11 2l-9 9" stroke="#000" strokeWidth="4" /></svg>}
  </span>
);

const layers: [string, number, boolean, boolean, React.ReactNode][] = [
  ["BARRIOS copiar", 130, false, true, <span className="h-[22px] w-[22px] border border-dashed border-[#ddd]" />],
  ["Número", 64, true, true, <I s={23}><path d="M1 3c4-3 8 0 12 0 4 1 7-2 10-1-2 4-1 8 0 12-3 2-7-2-11-1-3 0-6 5-10 4-2-4 1-9-1-14z" fill="#ddd" stroke="#999" /></I>],
  ["apt-airbnb", 87.7, false, false, <span className="h-[11px] w-[11px] rounded-full border-2 border-[#86595e] bg-[#c07880]" />],
  ["apartments_airbnb", 161, false, false, <span className="h-[11px] w-[11px] rounded-full border-2 border-[#8a6d2c] bg-[#dd9b35]" />],
  ["DISTRITOS_20151002", 182.4, false, true, <span className="h-[23px] w-[23px] border-2 border-[#999] bg-white" />],
];

const PanelButtons = () => (
  <div className="flex gap-[2px]">
    <span className="flex h-[20px] w-[20px] items-center justify-center rounded-[3px] border-2 border-[#8e8e8e] bg-[#f4f4f4]">
      <svg width="13" height="13" viewBox="0 0 13 13" fill="none" stroke="#000" strokeWidth="1.900"><path d="M4.500 4V1.500h7V8H9M1.500 4.500h7v7h-7z" /></svg>
    </span>
    <span className="flex h-[20px] w-[20px] items-center justify-center rounded-[3px] border-2 border-[#8e8e8e] bg-[#f4f4f4]">
      <svg width="12" height="12" viewBox="0 0 12 12" stroke="#000" strokeWidth="1.900"><path d="M1 1l10 10M11 1L1 11" /></svg>
    </span>
  </div>
);

/* ---------- map: points are digitised on five sheets, each with origin and scale ---------- */
type MapSheet = [number, number, number, number];
const N: MapSheet = [1280, 690, 1.9122, 2.529];
const C: MapSheet = [1560, 1130, 3, 3];
const E: MapSheet = [1920, 1130, 3, 3];
const S: MapSheet = [1420, 1480, 3, 3];
const T: MapSheet = [1860, 1480, 3, 3];
function d(...parts: (MapSheet | string)[]) {
  let sh: MapSheet = C;
  const out: string[] = [];
  for (const p of parts) {
    if (typeof p !== "string") { sh = p; continue; }
    for (const q of p.trim().split(/\s+/)) {
      const [x, y] = q.split(",").map(Number);
      out.push((sh[0] + x / sh[2]).toFixed(1) + " " + (sh[1] + y / sh[3]).toFixed(1));
    }
  }
  return "M" + out.join("L");
}

const outline = d(
  N, "80,547 118,512 125,498 150,487 172,487 180,500 208,523 228,523 255,503 295,484 320,495 345,473 375,465 435,462 447,448 481,422 472,385 461,358 447,347 462,332 484,340 486,350 511,367 508,385 497,427 517,432 530,421 567,427 600,407 610,412 625,407 645,418 680,425 715,446 755,470 768,487 790,492 817,508 832,546 875,556 923,583 970,575 985,571 995,577 1003,560 1045,516 1060,465 1072,430 1082,385 1100,352 1135,328 1158,282 1201,253 1195,215 1190,185 1200,140 1225,75 1242,50 1260,40 1290,55 1317,89 1347,88 1360,112 1375,155 1390,178 1395,268 1407,280 1427,290 1450,335 1458,418 1480,430 1517,465 1520,485 1533,503 1530,530 1515,545 1507,570 1485,593 1457,605 1410,667 1385,658 1365,660 1335,653 1310,638 1281,630 1270,580 1260,540 1245,512 1228,499 1205,497 1185,506 1140,545 1100,580 1085,585 1070,602 1027,618 1045,655 1075,698 1080,690 1083,715 1090,745 1100,800 1115,850 1118,880 1134,905 1140,945 1153,965 1160,985 1175,1000 1180,1015 1170,1040 1145,1078 1165,1102 1200,1100 1202,1132 1215,1145 1228,1185 1238,1215",
  E, "25,125 40,110 55,118 75,130 100,135 125,160 150,165 228,168 245,158 285,150 305,155 325,142 370,133 405,160 440,185 455,215 470,236 548,237 580,205 605,193 640,158 690,140 722,120 780,127 810,135 865,132 858,215 870,235 878,265 900,278 935,293 962,312 970,375 1000,395 1005,425 1018,455 1022,540 1030,554 1065,560 1085,568 1102,588 1090,610 1070,635 1063,665 1063,692 1085,725 1075,742 1040,735 1022,760 1045,818 1015,828 1015,838 975,850 910,868 870,875 810,910 775,912 743,928 715,915 690,920 688,950 660,960 680,1000 670,1035 687,1042 672,1085 657,1130 670,1170",
  T, "890,135 935,120 1010,122 1060,137 1080,130 1150,150 1190,112 1228,112 1225,52 1260,75 1300,120 1318,150 1322,200 1330,240 1320,300 1312,348 1280,362 1243,378 1215,355 1170,355 1130,335 1125,370 1105,425 1078,470 1080,505 1063,525 1058,580 1050,620 1025,650 1022,690 1045,672 1043,730 1000,775 995,795 940,850 915,890 890,955 850,1000 803,1045 785,1085 783,1125 790,1150 825,1152 850,1165 840,1173 720,1190 670,1192 620,1182 565,1165 525,1130 458,1105 445,1115 415,1100 340,1028 310,1005 265,968 230,990 195,1010 170,1022 145,1012 95,1052 40,1040 10,1040",
  S, "1320,1065 1285,1080 1227,1100 1205,1080 1145,1078 1068,1065 1060,1022 1005,985 967,943 975,830 985,730 998,622 960,630 925,645 840,665 704,704 650,692 592,676 525,655 462,687 400,655 345,638 310,603 275,630 255,570 200,480 150,400 90,287 210,283 240,305 280,325 335,330 395,328 415,315 455,313 457,326 515,310 555,253 573,245 570,215 550,185 537,150 535,110 519,70",
  C, "102,1080 118,1040 185,990 186,835 130,835 70,828 35,850 25,790 0,715 -30,680 -63,616 -150,600 -270,605 -300,600 -352,580",
  N, "318,1535 315,1510 320,1475 335,1440 330,1365 305,1315 315,1260 280,1243 240,1227 230,1200 243,1155 228,1120 230,1085 210,1060 208,1035 183,998 180,960 168,910 153,888 148,860 135,835 130,795 115,778 80,775 73,765 77,740 60,715 52,675 72,640 80,600"
) + "Z";

const B1 = "#b3cde3";
const P1 = "#8c96c6";
const M1 = "#8856a7";
const D1 = "#810f7c";
const L1 = "#ecf8fc";
const areas: [string, string][] = [
  [B1, d(C, "447,102 428,150 490,165 503,197 482,225 470,285 445,343 500,382 540,398 625,398 650,420 690,400 775,350 758,290 795,228 780,208 650,208 590,180 545,155 500,145")],
  [B1, d(C, "690,400 775,350 800,385 885,433 865,515 745,515 735,480 720,425")],
  [B1, d(C, "-63,605 0,612 255,650 298,745 215,795 186,835 130,835 70,828 35,850 0,715 -30,680")],
  [P1, d(C, "795,228 758,270 758,290 780,365 800,385 885,433 978,415 985,350 1050,270 1100,205 1105,130 1065,38 1020,70 950,102 880,133 850,150")],
  [P1, d(C, "475,400 500,382 540,398 625,398 655,425 660,445 632,470 645,565 560,540 470,525 447,470")],
  [P1, d(C, "655,425 690,400 720,425 735,480 745,515 740,540 665,548 645,565 632,470")],
  [P1, d(C, "232,518 258,535 290,532 297,457 322,457 343,475 352,555 358,515 430,515 500,530 535,535 645,565 658,580 690,640 672,693 655,735 690,805 615,808 597,825 615,890 610,930 570,910 475,942 445,935 410,890 370,850 260,778 298,745 258,655")],
  [P1, d(C, "885,433 978,415 1085,432 1045,475 1043,510 1060,600 1020,603 945,590 850,605 870,510")],
  [P1, d(E, "85,447 150,462 265,580 145,575 35,600 10,620 0,650 -20,640 -20,595 0,575 35,540 50,500")],
  [M1, d(E, "25,125 40,110 55,118 75,130 100,135 125,160 150,165 228,168 245,158 285,150 305,155 325,142 370,133 405,160 440,185 455,215 470,236 493,317 400,358 378,385 350,455 280,512 293,582 265,582 150,462 85,447 5,432 -40,417 -102,415 -95,350 -30,270 20,205")],
  [P1, d(E, "493,317 475,325 475,465 640,465 632,530 638,592 500,578 430,548 293,540 280,512 350,455 378,385 400,358")],
  [B1, d(E, "640,465 680,480 702,515 700,552 660,565 645,595 638,592 632,530")],
  [P1, d(E, "615,622 665,668 575,775 460,780 455,745 485,705")],
  [B1, d(E, "328,787 462,785 485,820 530,858 645,873 690,903 775,912 743,928 715,915 690,920 688,950 660,960 680,1000 670,1035 687,1042 672,1085 657,1130 670,1170", T, "785,185 1020,328 1060,340 1130,335 1125,370 1105,425 1078,470 1080,505 1063,525 1058,580 1050,620 1025,650 1022,690 1045,672 1043,730 910,675 855,628 830,610 795,607 660,515 682,475 650,405 625,410 600,390 635,300 715,235 690,212 650,235 650,255 610,260 530,225 525,200 478,195 505,122", E, "270,1075 330,1030 395,1015 390,940 352,850")],
  [P1, d(E, "462,782 800,785 930,800 1015,825 1015,838 975,850 910,868 870,875 810,910 690,903 645,873 530,858 485,820")],
  [M1, d(E, "35,600 145,575 265,580 298,647 180,650 130,700 55,702 5,645 15,620")],
  [B1, d(E, "55,702 130,700 180,650 298,647 345,697 325,725 275,750 275,782 190,795 105,780")],
  [B1, d(C, "1060,640 1085,645 1130,705 1180,782 1080,835 1062,745 1045,670")],
  [B1, d(C, "1080,835 1180,782 1205,815 1165,880 1130,920 1090,925 1088,860")],
  [P1, d(E, "125,815 180,860 110,885 35,945 40,960 0,970 5,925 45,918 85,880")],
  [M1, d(E, "180,860 198,900 185,910 105,960 38,962 35,945 110,885")],
  [P1, d(C, "845,605 945,590 1020,603 1045,670 990,687 840,683")],
  [M1, d(C, "665,548 740,540 750,515 865,515 845,605 840,683 838,755 830,815 690,805 655,735 672,693 690,640 658,575")],
  [D1, d(C, "742,700 838,708 830,815 732,810")],
  [M1, d(C, "615,808 650,818 690,805 830,815 832,903 615,890 597,825")],
  [M1, d(C, "840,683 990,687 1048,675 1060,745 1040,755 940,757 838,755")],
  [P1, d(C, "838,755 942,757 932,910 832,903")],
  [M1, d(C, "942,757 1040,755 1040,770 935,865")],
  [M1, d(C, "250,778 370,850 410,890 445,935 475,942 570,910 610,930 555,960 640,1055 610,1075 570,1130", S, "1000,70 845,150 765,163 690,208 645,262 573,245 570,215 550,185 537,150 535,110 519,70", C, "102,1080 118,1040 185,990 186,835 215,795")],
  [M1, d(C, "1012,1003 1080,970", E, "105,960 185,910 260,1045 320,1172 250,1155 210,1148 150,1155 90,1140 15,1112 -75,1083")],
  [P1, d(E, "188,908 352,850 390,942 320,955 305,1000 260,1045")],
  [D1, d(C, "612,890 732,895 845,905 930,910 935,865 1045,770 1055,745 1080,835 1088,870 1080,970 1012,1003 1005,1130 938,1140 920,1080 815,1102 808,1150", S, "1240,175 1335,305 1215,345 1190,370 1140,305 1060,262 1085,183 1035,150 1035,107 992,107 1000,165 940,185 885,212 835,203 845,150 1000,70", C, "580,1120 610,1085 640,1055 605,1030 555,960 612,930")],
  [M1, d(S, "992,107 1035,107 1035,150 1085,183 1058,258 1005,250 1000,165")],
  [P1, d(S, "690,208 765,163 840,155 835,203 885,212 940,185 1000,165 990,205 970,197 845,330 825,303 745,293 705,260")],
  [D1, d(S, "970,197 1000,210 1003,250 1058,258 915,375 845,330")],
  [D1, d(S, "1270,187 1350,178 1415,187 1370,262 1310,225")],
  [M1, d(S, "1235,52 1340,27 1358,90 1370,130 1350,178 1270,187 1240,172 1230,110")],
  [P1, d(S, "1358,90 1425,80 1418,185 1350,178 1370,130")],
  [B1, d(T, "110,35 190,62 255,92 235,125 240,195 250,200 375,240 340,315 280,270 240,215 200,192 95,187 105,85")],
  [M1, d(T, "95,187 200,192 240,215 280,270 230,330 220,345 155,320 140,360 150,440 122,458 95,410 80,330 65,300 45,262")],
  [P1, d(T, "155,318 225,345 235,385 235,515 160,495 122,458 150,440 140,360")],
  [B1, d(T, "280,270 340,315 485,358 465,450 235,515 235,385 228,330")],
  [M1, d(S, "690,208 705,260 745,293 825,303 845,330 915,375 820,450 760,508 718,480 690,420 600,318 645,262")],
  [M1, d(S, "915,375 1060,262 1140,308 1080,355 1035,410 950,400")],
  [B1, d(S, "90,287 210,283 240,305 280,325 335,330 395,328 415,315 455,313 457,326 515,310 555,253 573,245 645,262 600,318 275,630 255,570 200,480 150,400")],
  [B1, d(S, "600,318 690,420 718,480 695,515 670,520 665,540 515,508 470,440")],
  [P1, d(S, "718,480 760,508 765,515 800,540 885,530 1013,532 1003,622 960,630 925,645 840,665 704,704 650,692 592,676 672,605 665,540 670,520 695,515")],
  [P1, d(S, "915,378 950,400 935,440 880,490 893,510 885,530 800,540 765,515 760,508 820,450")],
  [B1, d(S, "950,400 1035,410 1130,405 1135,455 1175,480 1150,510 1140,555 1075,537 885,530 893,510 880,490 935,440")],
  [P1, d(S, "1035,410 1080,355 1140,308 1190,370 1165,398 1130,405")],
  [P1, d(S, "1130,405 1190,372 1235,430 1225,455 1180,480 1135,455")],
  [P1, d(S, "1190,370 1215,345 1275,325 1335,312 1362,335 1310,422 1260,440")],
  [B1, d(S, "1175,480 1225,455 1235,430 1255,440 1260,460 1215,510 1222,632 1135,637 1150,510")],
  [B1, d(S, "1260,440 1310,422 1362,335 1390,315", T, "80,350 95,410 122,458 160,495 235,515 220,570 130,640 90,660 10,672", S, "1318,665 1315,570 1280,550")],
  [P1, d(S, "1260,440 1280,550 1315,570 1318,665 1222,632 1215,510")],
  [B1, d(S, "1135,637 1222,632 1320,665 1325,685 1305,720 1305,790 1228,832 1190,820 1118,755 1113,720")],
  [P1, d(S, "1000,625 1135,637 1113,720 1118,755 1190,820 1228,832 1230,1098 1205,1080 1145,1078 1068,1065 1060,1022 1005,985 967,943 975,830")],
  [P1, d(T, "553,482 640,515 660,515 795,607 830,610 855,628 825,655 795,770 725,745 720,730 650,700 620,660 590,645 565,678 400,575 400,525 425,500 455,500 455,525 472,590 530,577 540,540")],
  [L1, d(S, "1240,172 1300,225 1340,240 1380,290 1388,315 1365,335 1325,285")],
  [P1, d(C, "605,1070 600,1060 625,1040 640,1055 622,1072")],
];

const INK = "#26262b";
const PALE = "#d3a9d0";
/* local borders inside the darkest districts are drawn in a pale ink */
const innerLines: string[] = [
  d(C, "665,895 662,980"), d(C, "732,895 715,990"), d(C, "765,905 790,1003"),
  d(C, "635,980 668,1050 700,1090 765,1105 815,1102"), d(C, "740,998 752,1040 750,1090"),
  d(C, "930,910 920,1080"), d(C, "845,997 1005,1003"), d(C, "945,912 1010,1000"),
  d(C, "690,1090 685,1130 695,1165 735,1150 760,1100"), d(C, "690,1090 750,1090 760,1100"), d(C, "735,1150 820,1225"), d(C, "695,1165 665,1230"),
  d(S, "1180,245 1215,290 1220,340"), d(S, "1180,245 1140,305"),
];
const lines: string[] = [
  d(N, "1027,618 973,620 965,670 943,740 960,850 995,970 960,1028 883,1075 875,1105 850,1125 823,1200"),
  d(C, "445,343 395,417 425,445 385,475 322,470"),
  d(N, "322,1497 390,1530 465,1565 545,1567 600,1542 683,1548"),
  d(C, "500,382 475,400"), d(C, "535,535 565,585 570,615 605,650 610,672 672,693"),
  d(C, "978,415 968,480 975,530 1020,600 1045,670"), d(C, "1085,432 1165,447 1240,463"), d(C, "1020,603 1057,597"),
  d(C, "845,905 850,950 835,1035 815,1102"), d(C, "612,930 635,980 740,998 835,1035"), d(C, "635,980 660,1045"),
  d(C, "935,910 1080,835"), d(C, "920,1080 1005,1083"), d(C, "660,1065 640,1085 610,1080"),
  d(C, "745,540 800,615 745,700"), d(C, "690,640 730,628 770,655"), d(C, "800,615 850,605"), d(C, "672,693 742,715"), d(C, "730,810 730,895"),
  d(C, "1062,745 1130,705"), d(C, "1080,970 1092,1110"),
  d(S, "820,210 815,250 820,300"), d(S, "690,420 740,425 800,385 845,330"), d(S, "1050,270 1050,340 1035,410"), d(S, "1035,410 1013,535"),
  d(S, "1080,410 1075,537"), d(S, "1085,183 1160,200 1240,172"), d(S, "1160,200 1180,245"), d(S, "1180,245 1280,248"),
  d(S, "1222,632 1228,832"), d(S, "1305,790 1300,900 1285,945 1235,968"), d(S, "1190,370 1260,440"),
  d(S, "1230,832 1230,1098"), d(S, "470,440 310,603"),
  d(T, "0,680 40,705 45,745 75,790 100,800 103,840 140,855 160,930 185,960 195,1008"), d(T, "465,450 505,437 530,478 553,482"),
  d(T, "250,200 330,155 350,200 375,240"), d(T, "440,110 435,130 375,240 340,315 290,410 240,450"), d(T, "478,195 455,240 430,335"),
  d(T, "385,215 465,215"), d(T, "190,62 135,190 105,280 65,320"), d(T, "105,280 155,320"), d(T, "150,170 245,195"),
  d(T, "485,358 600,390"), d(T, "580,75 580,120 755,172 800,100 815,45 850,-20"), d(T, "785,185 850,125"), d(T, "615,260 585,295 605,330"), d(T, "505,122 580,75"),
  d(E, "105,960 120,1030 270,1140"), d(E, "298,647 345,697 455,745"), d(E, "105,780 328,787"), d(E, "638,592 615,622"),
  d(E, "260,1045 310,1000 360,995 375,1015"), d(E, "445,787 470,880 440,925 390,942 398,1015 400,1125"), d(E, "475,325 475,236"),
];

function MapCanvas() {
  return (
    <svg width="2231" height="1228" viewBox="921 694 2231 1228" className="block">
      <path d={outline} fill={L1} />
      {areas.map(([c, p], i) => (
        <path key={i} d={p + "Z"} fill={c} stroke={INK} strokeOpacity=".9" strokeWidth="1.500" strokeDasharray="2.200 2" />
      ))}
      {innerLines.map((p, i) => (
        <path key={i} d={p} fill="none" stroke={PALE} strokeOpacity=".75" strokeWidth="1.300" strokeDasharray="2 2.400" />
      ))}
      {lines.map((p, i) => (
        <path key={i} d={p} fill="none" stroke={INK} strokeWidth="1.500" strokeDasharray="2.200 2.400" />
      ))}
      <path d={outline} fill="none" stroke="#2a2c30" strokeOpacity=".85" strokeWidth="1.600" strokeDasharray="4 .9" />
    </svg>
  );
}

const menu: [string, number, number][] = [
  ["Proyecto", 398.5, 63], ["Edición", 476, 49], ["Ver", 533, 22], ["Capa", 584, 37], ["Configuración", 672, 96],
  ["Complementos", 793.5, 102], ["Vectorial", 895.6, 58], ["Ráster", 969.5, 47], ["Base de datos", 1064.6, 100],
  ["Web", 1152, 32], ["Procesos", 1221, 63], ["Ayuda", 1297, 45],
];

const Spin = ({ t, w }: { t: string; w: number }) => (
  <div className="flex h-[31px] w-[112px] rounded-[3px] border-2 border-[#b9b9b9] bg-white">
    <div className="flex grow items-center pl-[6px] pt-px"><Fit w={w}>{t}</Fit></div>
    <div className="flex w-[22px] flex-col border-l-2 border-[#b9b9b9] bg-[#f4f4f4]">
      <div className="flex h-1/2 items-center justify-center border-b border-[#c4c4c4]"><svg width="10" height="7" viewBox="0 0 10 7"><path d="M0 7h10L5 0z" /></svg></div>
      <div className="flex h-1/2 items-center justify-center"><svg width="10" height="7" viewBox="0 0 10 7"><path d="M0 0h10L5 7z" /></svg></div>
    </div>
  </div>
);

const Adobe = ({ t, bg, fg }: { t: string; bg: string; fg: string }) => (
  <svg width="32" height="30" viewBox="0 0 32 30"><rect x="1.300" y="1.300" width="29.400" height="27.400" fill={bg} stroke={fg} strokeWidth="2.600" /><text x="16" y="21" fontSize="16" fontWeight="bold" textAnchor="middle" fontFamily="Open Sans, sans-serif" fill={fg}>{t}</text></svg>
);
const Task = ({ children, on, active }: { children: React.ReactNode; on?: boolean; active?: boolean }) => (
  <div className={"flex h-[58px] w-full flex-col items-center " + (active ? "bg-[#63533a]" : "")}>
    <div className="flex grow items-center">{children}</div>
    <div className={"h-[3px] w-full " + (on ? "bg-[#68b0ea]" : "")} />
  </div>
);

const status: Item[] = [
  [520, 316, <Fit w={316}>Alterna el estado de edición de la capa activa</Fit>],
  [1651.5, 86, <Fit w={86} className="pt-[2px]">Coordenada</Fit>],
  [1885, 369, <div className="flex h-[29px] w-[369px] items-center justify-center rounded-[3px] border-2 border-[#b9b9b9] bg-white pt-[2px]"><Fit w={118}>412697,4463477</Fit></div>],
  [2089, 26, <I s={25}><g stroke="#333" strokeWidth="1.500"><circle cx="7" cy="6" r="4" /><circle cx="12" cy="10" r="4.500" /><circle cx="16" cy="17" r="5" /><path d="M2 12l6 6M20 2L4 20M22 4l-8 4M9 19l9-5" /></g></I>],
  [2142, 44, <Fit w={43} className="pt-[2px]">Escala</Fit>],
  [2234, 128, (
    <div className="flex h-[29px] w-[128px] rounded-[3px] border-2 border-[#b9b9b9] bg-white">
      <div className="flex grow items-center pl-[5px] pt-[2px]"><Fit w={73}>1:173.237</Fit></div>
      <div className="flex w-[23px] items-center justify-center border-l-2 border-[#b9b9b9] bg-[#f0f0f0]"><svg width="10" height="7" viewBox="0 0 10 7"><path d="M0 0h10L5 7z" /></svg></div>
    </div>
  )],
  [2318, 20, <svg width="18" height="24" viewBox="0 0 18 24"><path d="M4 13V7c0-7 10-7 10 0v6" fill="none" stroke="#999" strokeWidth="2.500" /><rect x=".5" y="12" width="17" height="11.500" rx="2" fill="#5d5d5d" /></svg>],
  [2391.5, 84, <Fit w={84} className="pt-[2px]">Amplificador</Fit>],
  [2495.5, 112, <Spin t="100%" w={42} />],
  [2594, 62, <Fit w={62} className="pt-[2px]">Rotación</Fit>],
  [2695.5, 112, <Spin t="0,0" w={22} />],
  [2770, 20, <Check on />],
  [2829, 87, <Fit w={87} className="pt-[2px]">Representar</Fit>],
  [2912, 24, <I s={24}><circle cx="12" cy="12" r="9" stroke="#333" strokeWidth="3" /><path d="M12 0v24M0 12h24M12 3C6 7 6 17 12 21M12 3c6 4 6 14 0 18" stroke="#444" strokeWidth="1.700" /></I>],
  [3002.5, 148, <Fit w={148} className="pt-[2px]">EPSG:3042 (al vuelo)</Fit>],
  [3121, 26, <svg width="24" height="22" viewBox="0 0 24 22"><ellipse cx="12" cy="9.500" rx="11.500" ry="9" fill="#666" /><path d="M13 16l8 5.500-1-8z" fill="#666" /><path d="M5 8.500h3v3H5zM10.500 8.500h3v3h-3zM16 8.500h3v3h-3z" fill="#fff" /></svg>],
];

const tasks: Item[] = [
  [961, 26, <svg width="24" height="22" viewBox="0 0 24 22" fill="none" stroke="#fff" strokeWidth="1.600"><path d="M2 6h14v10H2zM2 0v3h14V0M2 22v-3h14v3M21 0v4M21 9v13" /><path d="M19.500 5h3v3h-3z" fill="#fff" /></svg>],
  [1035, 58, <Task on><svg width="34" height="34" viewBox="0 0 34 34"><circle cx="17" cy="18" r="15" fill="#ff6a1a" /><path d="M22 1c9 5 12 15 8 23-3 6-9 9-15 9 10-4 12-15 6-22z" fill="#ffcb2b" /><circle cx="17" cy="16" r="8.500" fill="#2c67c9" /><path d="M2 12C1 24 8 33 17 33c8 0 13-5 14-11-4 6-13 7-17 2 4 0 6-2 6-4-5 1-9-3-7-8C9 8 5 8 2 12z" fill="#f5432c" /></svg></Task>],
  [1106, 58, <Task><svg width="34" height="34" viewBox="0 0 34 34"><path d="M1 33l3-9C-2 12 7 1 17 1c9 0 16 7 16 16 0 12-13 20-24 13z" fill="#fff" /><path d="M4 30l2-6C2 14 9 4 17 4c8 0 13 6 13 13 0 10-11 16-20 11z" fill="#2cb742" /><path d="M11 10c1-2 3-1 3.500.5L15.500 13l-1.500 2c1 2 3 4 5 5l2-1.500 3 1.500c1 3-3 4-5 4-6-1-11-8-8-14z" fill="#fff" /></svg></Task>],
  [1177, 58, <Task><Adobe t="Ae" bg="#1f0a42" fg="#cf9bff" /></Task>],
  [1249, 58, <Task on><Adobe t="Ps" bg="#0b1150" fg="#7fc4ff" /></Task>],
  [1321, 58, <Task on><Adobe t="Ai" bg="#2a1500" fg="#ff9f1c" /></Task>],
  [1392, 70, <Task on active><I s={33}><QLogo /></I></Task>],
  [1463.5, 58, <Task on><svg width="35" height="35" viewBox="0 0 35 35" fill="none"><circle cx="17.500" cy="17.500" r="17" fill="#3fb283" /><g stroke="#d9f2e6" strokeWidth="1.400"><ellipse cx="17.500" cy="17.500" rx="4.500" ry="12" transform="rotate(20 17.500 17.500)" /><ellipse cx="17.500" cy="17.500" rx="4.500" ry="12" transform="rotate(80 17.500 17.500)" /><ellipse cx="17.500" cy="17.500" rx="4.500" ry="12" transform="rotate(140 17.500 17.500)" /></g><circle cx="17.500" cy="17.500" r="1.800" fill="#fff" /></svg></Task>],
  [2712, 24, <svg width="22" height="24" viewBox="0 0 22 24" fill="none" stroke="#fff" strokeWidth="1.800"><circle cx="15" cy="5" r="3.500" /><circle cx="7" cy="12" r="3.500" /><path d="M1 23c0-9 12-9 12 0M13 10c4-2 8 1 8 5" /></svg>],
  [2764.6, 18, <svg width="16" height="12" viewBox="0 0 16 12" fill="none" stroke="#fff" strokeWidth="2"><path d="M1 10l7-8 7 8" /></svg>],
  [2799, 22, <svg width="20" height="18" viewBox="0 0 20 18" fill="#fff"><path d="M5 0l5 3-5 3.500L0 3zM15 0l5 3-5 3.500L10 3zM5 6.500l5 3.200L5 13 0 9.700zM15 6.500l5 3.200L15 13l-5-3.300zM10 11l5 3.500L10 18l-5-3.500z" /></svg>],
  [2835, 24, <svg width="23" height="14" viewBox="0 0 23 14" fill="none" stroke="#fff" strokeWidth="1.800"><path d="M1 1h19v12H1zM22 4v6" /><path d="M4 4h7v6H4z" fill="#fff" /></svg>],
  [2868, 22, <svg width="21" height="18" viewBox="0 0 21 18" fill="none" stroke="#fff" strokeWidth="1.500"><path d="M1 6h3l5-5v16l-5-5H1zM13 6l6 6M19 6l-6 6" /></svg>],
  [2906, 22, <svg width="20" height="18" viewBox="0 0 20 18" fill="none" stroke="#fff" strokeWidth="1.500"><path d="M1 17C1 8 8 1 18 1" opacity=".7" /><path d="M6 17c0-6 5-11 12-11M10.500 17c0-4 3-7 7.500-7" /><path d="M15 13h4v4h-4z" fill="#fff" stroke="none" /></svg>],
  [2948.5, 28, <div className="flex flex-col items-center leading-[24px] text-white"><Fit w={27}>ESP</Fit><Fit w={17}>ES</Fit></div>],
  [3025.6, 86, <div className="flex flex-col items-center leading-[25px] text-white"><Fit w={40}>11:24</Fit><Fit w={86}>05/07/2018</Fit></div>],
  [3106, 26, <svg width="25" height="25" viewBox="0 0 25 25" fill="none" stroke="#fff" strokeWidth="1.900"><path d="M1.500 2h22v18h-7l-4 4-4-4h-7z" /></svg>],
  [3147, 2, <div className="h-[58px] w-px bg-[#7a6d52]" />],
];

const tahoma = "font-['DejaVu_Sans_Condensed','DejaVu_Sans',sans-serif]";

export default function App() {
  return (
    <div className="flex h-[2480px] w-[3508px] flex-col overflow-hidden border-2 border-[#2a3163] bg-white">
      <div className={"mt-[451px] ml-[352px] flex h-[1575px] w-[2800px] flex-col bg-[#f0f0f0] text-[15.5px] leading-none text-[#111] " + tahoma}>
        <div className="h-[35px] shrink-0 bg-white">
          <Strip className="h-[34px] font-['Open_Sans',sans-serif] text-[16.5px]" from={354} items={[
            [369, 22, <I s={22}><QLogo /></I>],
            [490, 206, <Fit w={206}>QGIS 2.18.13 - dia4_madrid</Fit>],
            [2984, 16, <span className="h-[2px] w-[14px] bg-black" />],
            [3049, 16, <svg width="15" height="15" viewBox="0 0 15 15" fill="none" stroke="#000" strokeWidth="1.800" className="-mt-[3px]"><path d="M1 4h10v10H1zM4 4V1h10v10h-3" /></svg>],
            [3116, 18, <svg width="16" height="16" viewBox="0 0 16 16" stroke="#000" strokeWidth="1.700" className="-mt-[3px]"><path d="M1 1l14 14M15 1L1 15" /></svg>],
          ]} />
        </div>
        <div className="h-[33px] shrink-0 border-b-2 border-[#bcbcbc] pt-[2px]">
          <Strip className="h-[29px]" from={354} items={menu.map(([t, c, w]) => [c, w, <Fit w={w}>{t}</Fit>] as Item)} />
        </div>
        <div className="h-[56px] shrink-0 border-b-2 border-[#bcbcbc]"><Strip className="h-[53px]" from={354} items={row1} /></div>
        <div className="h-[57px] shrink-0 border-b-2 border-[#b0b0b0]"><Strip className="h-[56px]" from={354} items={row2} /></div>
        <div className="h-[55px] shrink-0 border-b-2 border-[#bcbcbc]">
          <Strip className="h-[54px]" from={354} items={[
            [368, 8, <Handle />],
            [396, 36, <I><path d="M1 1l5 1 5-1 6 1 6-1v20l-7 1-8-1-7 1z" fill="#c9e8ba" /><path d="M2 8l6-4 5 5-4 6-6 3zM14 3l7 2-2 6-5-2z" fill="#a6d998" /><path d="M10 10l5-1-2 8" stroke="#a9c4ea" strokeWidth="1.800" /><g transform="translate(12 11) scale(.54)"><QLogo /></g></I>],
          ]} />
        </div>

        <div className="flex h-[1236px] shrink-0 pt-[2px]">
          <div className="flex w-[76px] shrink-0 flex-col border-r-2 border-[#bcbcbc]">
            <div className="flex h-[17px] items-end justify-center pl-2"><Dots w={62} /></div>
            {side.map(([ic, ar], i) => (
              <div key={i} className="flex h-[49.6px] shrink-0 items-center pl-[12px]">
                <I s={35}>{ic}</I>
                {ar && <span className="ml-[8px]"><Arrow /></span>}
              </div>
            ))}
            <div className="flex h-[18px] items-end justify-center pt-[8px] pl-2"><Dots w={62} /></div>
          </div>

          <div className="flex w-[480px] shrink-0 flex-col">
            <div className="flex h-[28px] items-center">
              <div className="ml-[5px] w-[153px]"><Dots w={131} /></div>
              <Fit w={120} className="pt-[2px]">Panel del explorador</Fit>
              <div className="ml-[20px] w-[138px]"><Dots w={131} /></div>
              <PanelButtons />
            </div>
            <Strip className="h-[46px]" from={430} items={[
              [452.5, 24, <I s={22}><path d="M2 2h17v18H2z" fill="#f8f8f8" stroke="#888" /><rect x="15" y="15" width="8" height="8" fill="#5f9a5f" /><path d="M19 16.500v5M16.500 19h5" stroke="#fff" /></I>],
              [492, 24, <I s={23}><Refresh /></I>],
              [532, 24, <I s={23}><Funnel /></I>],
              [572, 24, <I s={23}><TreeArrow up /></I>],
              [611, 24, <I s={23}><Info /></I>],
            ]} />
            <div className="h-[441px] w-[479px] shrink-0 rounded-[2px] border-2 border-[#b9b9b9] bg-white pt-[1px]">
              {tree.map(([t, w, p, ic], i) => (
                <div key={t} className="flex h-[23.33px] items-center pl-[7px]">
                  <Branch plus={p} last={i === tree.length - 1} h="h-[23.4px]" />
                  <span className="mr-[7px] ml-[3px] flex w-[24px] justify-center">{ic}</span>
                  <Fit w={w} className="pt-[5px]">{t}</Fit>
                </div>
              ))}
            </div>
            <div className="flex h-[11px] items-center justify-center"><Dots w={153} /></div>
            <div className="flex h-[24px] items-center">
              <div className="ml-[3px] w-[171px]"><Dots w={160} /></div>
              <Fit w={90} className="pt-[3px]">Panel de capas</Fit>
              <div className="ml-[12px] w-[160px]"><Dots w={156} /></div>
              <PanelButtons />
            </div>
            <Strip className="h-[49px]" from={430} items={[
              [453, 24, <I s={23}><path d="M1 8l9-4 4 6-8 4z" fill="#ffe14d" /><path d="M1 12l6 0 2 6-5 1z" fill="#6b96c8" /><path d="M2 16l5-1 5 7H5z" fill="#d9363e" /><path d="M8 14l6-7 5 4c-1 6-5 9-9 10z" fill="#d9943c" stroke="#9a6420" /><path d="M16 9l7-8" stroke="#e0a030" strokeWidth="3" /></I>],
              [492.4, 24, <I s={24}><path d="M1 9h11v13H1zM4 6h11v13H4zM8 4h10v14H8z" fill="#eee" stroke="#777" /><path d="M13 1v12" stroke={DB} strokeWidth="2" /><rect x="15" y="14" width="8.500" height="8.500" fill="#f4f4f4" stroke="#4f8f4f" strokeWidth="1.600" /></I>],
              [533, 28, <I s={26}><path d="M1 12c5-8 16-8 21 0-5 8-16 8-21 0z" fill="#eee" stroke="#aaa" /><circle cx="11" cy="11.500" r="5" fill="#5d8abf" /><circle cx="11" cy="11.500" r="2" fill="#1c2f47" /><path d="M1 8c5-6 15-6 21 0" stroke="#bbb" strokeWidth="2" /><path d="M17 20h7l-3.500 4z" fill="#000" /></I>],
              [571, 24, <I s={23}><Funnel /></I>],
              [611.5, 24, <I s={24}><Epsilon c="#999" /><path d="M12 12h11v3l-3 2v6h-5v-6l-3-2z" fill="#e4e4e4" stroke="#aaa" /></I>],
              [638, 14, <Arrow c="#999" />],
              [668, 24, <I s={24}><TreeArrow /></I>],
              [707.7, 24, <I s={24}><TreeArrow up /></I>],
              [746.5, 24, <I s={24}><path d="M3 2h17v18H3z" fill="#f4f4f4" stroke="#777" strokeWidth="1.300" /><rect x="15" y="15" width="9" height="8" rx="1" fill="#e8505b" /><path d="M17 19h5" stroke="#fff" strokeWidth="1.700" /></I>],
            ]} />
            <div className="h-[635px] w-[479px] shrink-0 rounded-[2px] border-[3px] border-[#1f82d2] bg-white pt-[1px] font-bold text-black">
              {layers.map(([t, w, p, on, sym], i) => (
                <div key={t} className="flex h-[23.2px] items-center pl-[6px]">
                  <Branch plus={p} last={i === 4} h="h-[23.2px]" />
                  <span className="ml-[3px]"><Check on={on} /></span>
                  <span className="ml-[7px] flex h-[23px] w-[26px] items-center justify-center">{sym}</span>
                  <div className={"ml-[4px] flex h-[23px] w-[385px] items-center border " + (i === 3 ? "border-dotted border-black" : "border-transparent")}>
                    <Fit w={w} className="ml-[3px] pt-[4px]" inner={i === 3 ? "underline decoration-2 underline-offset-2" : ""}>{t}</Fit>
                  </div>
                </div>
              ))}
            </div>
          </div>

          <div className="flex w-[9px] shrink-0 flex-col items-center">
            <div className="mt-[412px] flex flex-col">
              {Array.from({ length: 20 }, (_, i) => <span key={i} className="mb-[6px] h-[3px] w-[3px] shrink-0 border-r border-b border-white bg-[#bbb]" />)}
            </div>
          </div>
          <div className="h-[1234px] grow border-2 border-t-[3px] border-b-[3px] border-[#bdbdbd] bg-white"><MapCanvas /></div>
        </div>

        <Strip className="h-[45px] shrink-0 pt-px" from={354} items={status} />

        <div className="flex h-[58px] shrink-0 bg-[#372505] text-[15.500px]">
          <div className="flex w-[70px] items-center justify-center">
            <svg width="26" height="24" viewBox="0 0 26 24" fill="#fff"><path d="M0 3.500L11 2v9.300H0zM12.500 1.800L26 0v11.300H12.500zM0 12.700h11V22L0 20.500zM12.500 12.700H26V24l-13.500-1.800z" /></svg>
          </div>
          <div className="flex w-[502px] items-center border-t border-[#ccc] bg-[#f2f2f2] font-['Open_Sans',sans-serif] text-[21px] text-[#444]">
            <span className="ml-[14px] h-[31px] w-[31px] rounded-full border-[4px] border-black" />
            <Fit w={234} className="ml-[14px] pt-px">Escribe aquí para buscar</Fit>
            <svg width="18" height="26" viewBox="0 0 18 26" fill="none" stroke="#222" strokeWidth="1.700" className="ml-[170px]"><rect x="5.500" y="1" width="7" height="15" rx="3" /><path d="M2 12v4c0 6 14 6 14 0v-4M9 20v5M5 25h8" /></svg>
          </div>
          <Strip className="h-[58px] font-['Open_Sans',sans-serif]" from={926} items={tasks} />
        </div>
      </div>
    </div>
  );
}
